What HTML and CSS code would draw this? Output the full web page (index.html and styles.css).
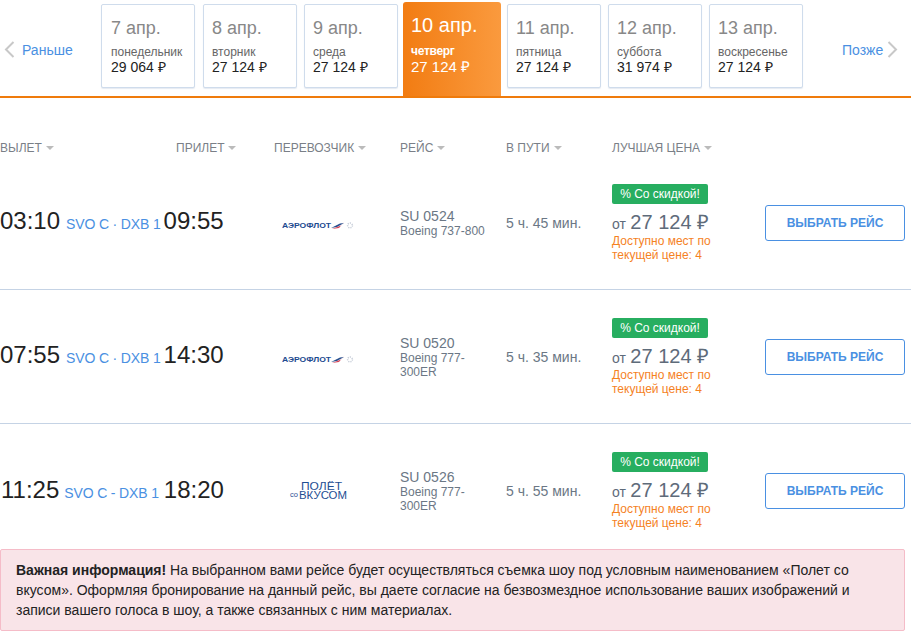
FILE: index.html
```html
<!DOCTYPE html>
<html lang="ru">
<head>
<meta charset="utf-8">
<title>Рейсы</title>
<link rel="stylesheet" href="styles.css">
</head>
<body>
<nav class="dates">
  <a class="nav nav-prev"><svg class="chev" width="11" height="17" viewBox="0 0 11 17"><path d="M9.5 1 L2 8.5 L9.5 16"/></svg><span>Раньше</span></a>
  <div class="day d1"><div class="date">7 апр.</div><div class="wd">понедельник</div><div class="pr">29 064 ₽</div></div>
  <div class="day d2"><div class="date">8 апр.</div><div class="wd">вторник</div><div class="pr">27 124 ₽</div></div>
  <div class="day d3"><div class="date">9 апр.</div><div class="wd">среда</div><div class="pr">27 124 ₽</div></div>
  <div class="day active"><div class="date">10 апр.</div><div class="wd">четверг</div><div class="pr">27 124 ₽</div></div>
  <div class="day d5"><div class="date">11 апр.</div><div class="wd">пятница</div><div class="pr">27 124 ₽</div></div>
  <div class="day d3"><div class="date">12 апр.</div><div class="wd">суббота</div><div class="pr">31 974 ₽</div></div>
  <div class="day d3"><div class="date">13 апр.</div><div class="wd">воскресенье</div><div class="pr">27 124 ₽</div></div>
  <a class="nav nav-next"><span>Позже</span><svg class="chev" width="11" height="17" viewBox="0 0 11 17"><path d="M1.5 1 L9 8.5 L1.5 16"/></svg></a>
</nav>

<div class="grid head">
  <div class="th">ВЫЛЕТ</div>
  <div class="th">ПРИЛЕТ</div>
  <div class="th">ПЕРЕВОЗЧИК</div>
  <div class="th">РЕЙС</div>
  <div class="th">В ПУТИ</div>
  <div class="th">ЛУЧШАЯ ЦЕНА</div>
</div>

<div class="grid row">
  <div class="times"><span class="time">03:10</span><span class="route">SVO C · DXB 1</span><span class="time">09:55</span></div>
  <div class="carrier">
    <svg class="logo" width="74" height="14" viewBox="0 0 74 14"><text class="af" x="0" y="9.5" textLength="49" lengthAdjust="spacingAndGlyphs">АЭРОФЛОТ</text><path class="af-b" d="M49 10 L58 5.5 L62 5 L55 9 Z"/><path class="af-r" d="M50 11 L59 7.5 L63 3 L57 10 Z"/><circle class="af-s" cx="68" cy="7.5" r="2.4"/></svg>
  </div>
  <div class="flight"><div class="fn">SU 0524</div><div class="pl">Boeing 737-800</div></div>
  <div class="dur">5 ч. 45 мин.</div>
  <div class="price"><span class="badge">% Со скидкой!</span><div class="amount"><span class="ot">от</span> <span class="sum">27 124 ₽</span></div><div class="left">Доступно мест по<br>текущей цене: 4</div></div>
  <a class="btn">ВЫБРАТЬ РЕЙС</a>
</div>

<div class="grid row">
  <div class="times"><span class="time">07:55</span><span class="route">SVO C · DXB 1</span><span class="time">14:30</span></div>
  <div class="carrier">
    <svg class="logo" width="74" height="14" viewBox="0 0 74 14"><text class="af" x="0" y="9.5" textLength="49" lengthAdjust="spacingAndGlyphs">АЭРОФЛОТ</text><path class="af-b" d="M49 10 L58 5.5 L62 5 L55 9 Z"/><path class="af-r" d="M50 11 L59 7.5 L63 3 L57 10 Z"/><circle class="af-s" cx="68" cy="7.5" r="2.4"/></svg>
  </div>
  <div class="flight"><div class="fn">SU 0520</div><div class="pl">Boeing 777-<br>300ER</div></div>
  <div class="dur">5 ч. 35 мин.</div>
  <div class="price"><span class="badge">% Со скидкой!</span><div class="amount"><span class="ot">от</span> <span class="sum">27 124 ₽</span></div><div class="left">Доступно мест по<br>текущей цене: 4</div></div>
  <a class="btn">ВЫБРАТЬ РЕЙС</a>
</div>

<div class="grid row last">
  <div class="times third"><span class="time">11:25</span><span class="route">SVO C - DXB 1</span><span class="time">18:20</span></div>
  <div class="carrier">
    <svg class="logo tall" width="74" height="22" viewBox="0 0 74 22"><text class="pv" x="19" y="10" textLength="41" lengthAdjust="spacingAndGlyphs">ПОЛЁТ</text><text class="pv-s" x="8" y="16.5" textLength="8" lengthAdjust="spacingAndGlyphs">со</text><text class="pv" x="17" y="19" textLength="48" lengthAdjust="spacingAndGlyphs">ВКУСОМ</text></svg>
  </div>
  <div class="flight"><div class="fn">SU 0526</div><div class="pl">Boeing 777-<br>300ER</div></div>
  <div class="dur">5 ч. 55 мин.</div>
  <div class="price"><span class="badge">% Со скидкой!</span><div class="amount"><span class="ot">от</span> <span class="sum">27 124 ₽</span></div><div class="left">Доступно мест по<br>текущей цене: 4</div></div>
  <a class="btn">ВЫБРАТЬ РЕЙС</a>
</div>

<div class="alert"><b>Важная информация!</b> На выбранном вами рейсе будет осуществляться съемка шоу под условным наименованием «Полет со вкусом». Оформляя бронирование на данный рейс, вы даете согласие на безвозмездное использование ваших изображений и записи вашего голоса в шоу, а также связанных с ним материалах.</div>
</body>
</html>
```

FILE: styles.css
```css
* { box-sizing: border-box; }
html, body { margin: 0; padding: 0; background: #fff; }
body { width: 911px; height: 635px; overflow: hidden; font-family: "Liberation Sans", Arial, sans-serif; color: #222; }

.dates { display: flex; align-items: flex-end; height: 98px; border-bottom: 2px solid #ef7b0c; }
.nav { display: flex; align-items: center; gap: 7px; color: #4a90e2; font-size: 14px; line-height: 16px; align-self: flex-start; margin-top: 41px; }
.nav-prev { width: 101px; padding-left: 4px; }
.nav-next { margin-left: 32px; gap: 4px; }
.chev { fill: none; stroke: #c8c8c8; stroke-width: 2; }

.day { width: 94px; height: 84px; margin-bottom: 8px; padding: 11px 0 0 8px; background: #fff; border: 1px solid #cfdcec; border-radius: 2px; box-shadow: 0 1px 1px rgba(150,170,200,.25); }
.d1 { margin-right: 8px; padding-left: 9px; }
.d2 { margin-right: 7px; }
.d3 { margin-right: 7px; }
.d2 + .d3 { margin-right: 5px; }
.active + .d5 { margin-left: 6px; margin-right: 7px; }
.date { font-size: 18px; line-height: 24px; color: #888; }
.wd { font-size: 12px; line-height: 14px; color: #666; margin-top: 5px; }
.pr { font-size: 14px; line-height: 17px; color: #222; }
.day.active { width: 98px; height: 94px; margin: 0; padding: 11px 0 0 8px; border: 0; border-radius: 3px 3px 0 0; background: linear-gradient(90deg, #f27c12, #fa9a3e); box-shadow: none; }
.active .date { font-size: 20px; color: #fff; line-height: 27px; margin-top: -1px; }
.active .wd { font-weight: bold; color: #fff; margin-top: 5px; letter-spacing: -.3px; }
.active .pr { color: #fff; font-size: 15px; margin-top: 0; }

.grid { display: grid; grid-template-columns: 176px 98px 126px 106px 106px 153px 140px; }
.head { height: 58px; padding-top: 43px; }
.th { font-size: 12px; line-height: 14px; color: #7a7f87; white-space: nowrap; }
.th::after { content: ""; display: inline-block; width: 0; height: 0; margin-left: 4px; vertical-align: 2px; border: 4px solid transparent; border-top-color: #bbb; border-bottom: 0; }

.row { height: 134px; align-items: center; border-bottom: 1px solid #c5d3e5; }
.row.last { border-bottom: 0; margin-bottom: -9px; }
.times { grid-column: span 2; display: flex; align-items: baseline; white-space: nowrap; padding-bottom: 3px; }
.third { padding-left: 1px; }
.time { font-size: 24px; color: #222; }
.route { font-size: 14px; letter-spacing: -.15px; color: #4a90e2; margin: 0 3px 0 6px; }
.third .route { margin: 0 5px 0 5px; }
.carrier { padding: 4px 0 0 8px; }
.logo { display: block; }
.logo.tall { margin-top: -4px; }
.af { font-size: 7px; font-weight: bold; fill: #1d4a8f; }
.af-b { fill: #27508f; }
.af-r { fill: #d8475a; }
.af-s { fill: none; stroke: #c3cad6; stroke-width: 1.5; stroke-dasharray: 1 1; }
.pv { font-size: 10.5px; fill: #1f4e93; }
.pv-s { font-size: 7px; fill: #1f4e93; }
.flight { color: #6b7785; padding-top: 2px; }
.fn { font-size: 14px; line-height: 13px; }
.pl { font-size: 12px; line-height: 14px; margin-top: 1px; }
.dur { font-size: 14px; color: #6b7785; }
.price { display: flex; flex-direction: column; align-items: flex-start; }
.badge { width: 96px; height: 20px; line-height: 20px; text-align: center; background: #27ae60; color: #fff; font-size: 12px; border-radius: 2px; }
.amount { margin-top: 8px; height: 22px; line-height: 20px; color: #5e6b7a; white-space: nowrap; }
.ot { font-size: 14px; }
.sum { font-size: 20px; }
.left { font-size: 12px; line-height: 14px; color: #f5821f; }
.btn { display: block; width: 140px; height: 36px; line-height: 34px; text-align: center; border: 1px solid #4a90e2; border-radius: 3px; color: #4a90e2; font-size: 12px; font-weight: bold; }

.alert { position: relative; width: 905px; height: 82px; padding: 10px 15px; border: 1px solid #f5bcc8; border-radius: 2px; background: #f9e4e8; font-size: 14px; line-height: 20px; color: #222; }
```
